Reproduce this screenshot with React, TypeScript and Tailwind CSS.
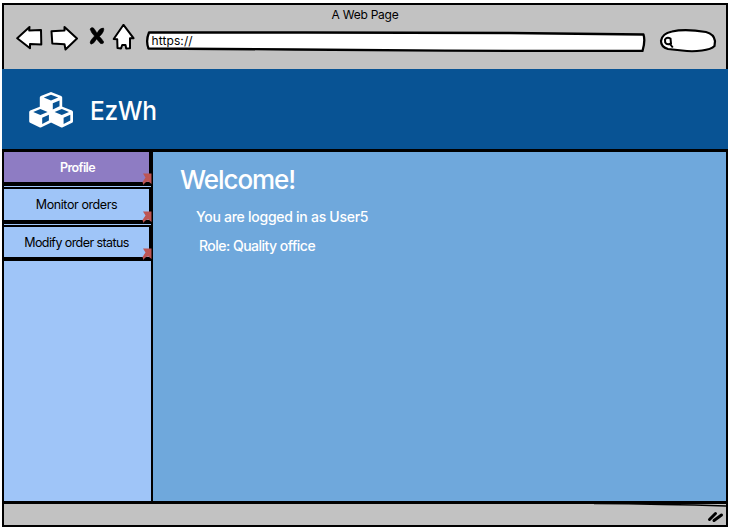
import type { ReactNode } from "react";

function Cube({ x, y }: { x: number; y: number }) {
  return (
    <g transform={`translate(${x} ${y})`}>
      <path d="M0 0L10.2 4Q11.2 4.6 11.2 5.6V14.8Q11.2 15.9 10.3 16.3L1 20.8Q0 21.2-1 20.8L-10.3 16.3Q-11.2 15.9-11.2 14.8V5.6Q-11.2 4.6-10.2 4Z" fill="#fff" />
      <path d="M0 2.7L7.2 5.6L0 8.6L-7.2 5.6ZM1.8 11.3L8.5 8.4V14.2L1.8 17.5Z" fill="#085394" />
    </g>
  );
}

function Logo() {
  return (
    <svg className="mt-px h-9 w-11" viewBox="0 0 44 36">
      <Cube x={22} y={0} />
      <Cube x={11.4} y={14.4} />
      <Cube x={32.8} y={14.4} />
    </svg>
  );
}

function NavIcon({ d, className }: { d: string; className: string }) {
  return (
    <svg className={`shrink-0 ${className}`} viewBox="0 0 28 28" width="28" height="28" fill="#fff" stroke="#000" strokeWidth="2" strokeLinejoin="round">
      <path d={d} />
    </svg>
  );
}

function Toolbar() {
  return (
    <div className="flex h-11 items-start">
      <NavIcon className="ml-[12px] mt-px" d="M1.2 14.3L13.5 3L13.2 6.5L25 6L25.3 20.5L14 20L14 24.3Z" />
      <NavIcon className="ml-[6px] mt-px" d="M1.5 7.2L14.5 6.5L14.5 3L27 14.5L15.5 25.5L14.5 20.3L2.3 19.5Z" />
      <svg className="ml-[10px] mt-[4px] shrink-0" width="18" height="18" viewBox="0 0 18 18" fill="#000">
        <path d="M2 2Q4-.5 6 1.5L9 6Q12 .5 15.5 1Q17 4 11.5 9.5Q14 12 15.8 15Q15.5 17.5 12.5 16.5L8.5 12Q6 17 3 17.2Q1 15.5 3.5 12.5L6.5 9Q3 5.500 2 2Z" stroke="#000" strokeWidth=".5" />
      </svg>
      <NavIcon className="ml-[3px] mt-px" d="M14.500 .8L24.500 14.200L21 14.300L21 24.200L17.200 24.500L16.500 21L13.200 21L12 24.500L8.500 24L8.200 15.300L4.700 15Z" />
      <div className="relative ml-[8px] mt-[7px] h-5 w-[502px]">
        <svg className="absolute inset-0" width="502" height="22" viewBox="0 0 502 22" fill="#fff" stroke="#000" strokeWidth="2.3" strokeLinejoin="round">
          <path d="M4 2.500L160 2.500L365 3L498.500 4.500Q500.500 11 497.500 21L300 20.700L150 19.500L3.500 18.500Q.5 11 4 2.500Z" />
        </svg>
        <span className="relative block pl-[6.500px] pt-px text-[12px] leading-5 tracking-[0.1px]">https://</span>
      </div>
      <svg className="ml-[11px] mt-[5px] shrink-0" width="60" height="27" viewBox="0 0 60 27" fill="#fff" stroke="#000" strokeWidth="2.2">
        <path d="M14 3.500Q27 .5 48 4Q56 6 57 13L56.500 18Q53 21.500 44 22.500Q34 24 24 22.500L10 21Q3 19 3 13Q4 5.500 14 3.500Z" />
        <path d="M7 11.500Q9 8.500 12.500 10.500L13 15.500Q9 17.500 7.200 14.500ZM12 16L14.800 19.500" strokeWidth="2" />
      </svg>
    </div>
  );
}

function CornerMark() {
  return (
    <svg className="absolute -bottom-[3px] -right-[3px] z-10" width="10" height="12" viewBox="0 0 10 12" fill="#bd5553">
      <path d="M1 .5H9.500V11L6.500 8.500Q3 8.500 1.500 12L.5 9L3.500 4.500Z" />
    </svg>
  );
}

function MenuItem({ children, className }: { children: ReactNode; className: string }) {
  return (
    <div className={`relative flex w-[149px] items-center justify-center border-x-2 border-b-4 border-t-2 border-black pt-[2px] text-[12.5px] ${className}`}>
      {children}
      <CornerMark />
    </div>
  );
}

export default function App() {
  return (
    <div className="h-[528px] w-[733px] overflow-hidden bg-white pl-[2px] pt-[3px] font-[Inter,'Noto_Sans',sans-serif] text-black">
      <div className="flex h-[524px] w-[726px] flex-col bg-[#c2c2c2]">
        <header className="h-[66px] shrink-0 border-x-2 border-t-2 border-black">
          <div className="h-[18px] text-center text-[12px] leading-[20px] tracking-[-0.25px]">A Web Page</div>
          <Toolbar />
        </header>
        <div className="flex h-20 shrink-0 items-center bg-[#085394] pl-[27px] text-white">
          <Logo />
          <h1 className="ml-[17px] mt-[3px] text-[26px] font-medium leading-8 tracking-[-0.2px]"><span className="inline-block origin-left scale-x-[0.94]">EzWh</span></h1>
        </div>
        <main className="flex h-[352px] shrink-0 border-r-2 border-black">
          <nav className="w-[151px] shrink-0 border-r-2 border-black bg-[#9fc5f8]">
            <div className="h-[352px] border-l-2 border-t border-black">
              <div className="-ml-[2px] flex flex-col gap-px">
                <MenuItem className="h-9 bg-[#8e7cc3] font-semibold text-white"><span className="ml-[2px] tracking-[-0.6px]">Profile</span></MenuItem>
                <MenuItem className="h-[37px] bg-[#9fc5f8]"><span className="tracking-[-0.4px]">Monitor orders</span></MenuItem>
                <MenuItem className="h-9 bg-[#9fc5f8]"><span className="tracking-[-0.58px]">Modify order status</span></MenuItem>
              </div>
            </div>
          </nav>
          <section className="grow border-t-[3px] border-black bg-[#6fa8dc] pl-[27px] pt-[12px] text-white">
            <h2 className="text-[26px] font-medium leading-8 tracking-[-1.05px]">Welcome!</h2>
            <p className="ml-4 mt-[11px] text-[14px] font-medium leading-5 tracking-[-0.27px]">You are logged in as User5</p>
            <p className="ml-[19px] mt-[9px] text-[14px] font-medium leading-5 tracking-[-0.52px]">Role: Quality office</p>
          </section>
        </main>
        <footer className="relative h-[26px] shrink-0 border-x-2 border-b-2 border-t-[3px] border-black">
          <svg className="absolute -top-[3px] right-0" width="722" height="24" viewBox="0 0 722 24" fill="none" stroke="#000">
            <path d="M590 2.5Q660 3 722 5" strokeWidth="1.6" />
            <path d="M705.5 18.5L711.5 12.5M710 19.5L717.5 14" strokeWidth="3" strokeLinecap="round" />
          </svg>
        </footer>
      </div>
    </div>
  );
}
